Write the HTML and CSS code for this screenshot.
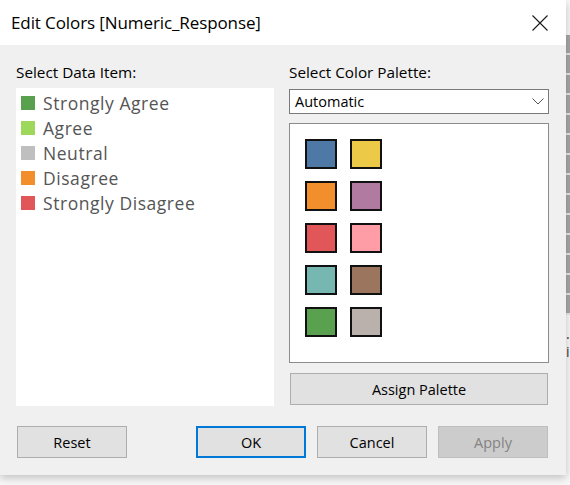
FILE: index.html
```html
<!DOCTYPE html>
<html>
<head>
<meta charset="utf-8">
<link rel="stylesheet" href="styles.css">
</head>
<body>
<div class="screen">
  <div class="dialog">
    <div class="titlebar">
      <span class="title">Edit Colors [Numeric_Response]</span>
      <svg class="close" width="16" height="16" viewBox="0 0 16 16"><path d="M0.5 0.5 L15.5 15.5 M15.5 0.5 L0.5 15.5" stroke="#1a1a1a" stroke-width="1.1" fill="none"/></svg>
    </div>
    <div class="content">
      <div class="columns">
        <div class="col-left">
          <div class="label">Select Data Item:</div>
          <div class="listbox">
            <div class="item"><span class="chip" style="background:#59a14f"></span>Strongly Agree</div>
            <div class="item"><span class="chip" style="background:#9dd85a"></span>Agree</div>
            <div class="item"><span class="chip" style="background:#bfbfbf"></span>Neutral</div>
            <div class="item"><span class="chip" style="background:#f28e2b"></span>Disagree</div>
            <div class="item"><span class="chip" style="background:#e15759"></span>Strongly Disagree</div>
          </div>
        </div>
        <div class="col-right">
          <div class="label">Select Color Palette:</div>
          <div class="select">
            <span>Automatic</span>
            <svg class="chev" width="12" height="7" viewBox="0 0 12 7"><path d="M0.5 0.5 L6 6 L11.5 0.5" stroke="#555" stroke-width="1" fill="none"/></svg>
          </div>
          <div class="palette">
            <div class="swatches">
              <span class="sw" style="background:#4e79a7"></span>
              <span class="sw" style="background:#edc948"></span>
              <span class="sw" style="background:#f28e2b"></span>
              <span class="sw" style="background:#b07aa1"></span>
              <span class="sw" style="background:#e15759"></span>
              <span class="sw" style="background:#ff9da7"></span>
              <span class="sw" style="background:#76b7b2"></span>
              <span class="sw" style="background:#9c755f"></span>
              <span class="sw" style="background:#59a14f"></span>
              <span class="sw" style="background:#bab0ac"></span>
            </div>
          </div>
          <button class="btn assign">Assign Palette</button>
        </div>
      </div>
      <div class="buttons">
        <button class="btn">Reset</button>
        <div class="spacer"></div>
        <button class="btn ok">OK</button>
        <button class="btn">Cancel</button>
        <button class="btn disabled">Apply</button>
      </div>
    </div>
  </div>
  <div class="backdrop">
    <div class="dashes"></div>
    <div class="bits"><span class="dot">.</span><span class="ibit">i</span></div>
  </div>
</div>
</body>
</html>
```
FILE: styles.css
```css
html, body {
  margin: 0;
  padding: 0;
}
body {
  width: 570px;
  height: 485px;
  overflow: hidden;
  background: #f7f7f7;
  font-family: "Open Sans", "Noto Sans", "Liberation Sans", sans-serif;
}
.screen {
  display: flex;
  width: 570px;
  height: 485px;
}
.dialog {
  width: 566px;
  height: 475px;
  flex: none;
  background: #f0f0f0;
  box-shadow: 0 3px 8px rgba(0,0,0,0.22);
  display: flex;
  flex-direction: column;
  position: relative;
  z-index: 1;
}
.titlebar {
  height: 45px;
  background: #fff;
  display: flex;
  align-items: center;
  justify-content: space-between;
  padding: 0 18px 0 11px;
  box-sizing: border-box;
  flex: none;
}
.title {
  font-size: 17px;
  color: #000;
  letter-spacing: -0.1px;
}
.close {
  display: block;
}
.content {
  padding: 17px 0 0 16px;
  display: flex;
  flex-direction: column;
}
.columns {
  display: flex;
  gap: 15px;
}
.col-left {
  width: 258px;
  display: flex;
  flex-direction: column;
}
.col-right {
  width: 260px;
  display: flex;
  flex-direction: column;
}
.label {
  font-size: 15.3px;
  line-height: 20px;
  height: 20px;
  color: #000;
}
.col-left .label {
  margin-bottom: 6px;
}
.col-right .label {
  margin-bottom: 7px;
}
.listbox {
  height: 318px;
  background: #fff;
  padding: 2px 0 0 5px;
  box-sizing: border-box;
}
.item {
  height: 25px;
  display: flex;
  align-items: center;
  gap: 8px;
  font-family: "Open Sans", "Noto Sans", sans-serif;
  font-size: 17.5px;
  letter-spacing: 0.55px;
  color: #555;
}
.chip {
  width: 14px;
  height: 14px;
  flex: none;
}
.select {
  height: 25px;
  box-sizing: border-box;
  border: 1px solid #7a7a7a;
  background: #fff;
  display: flex;
  align-items: center;
  justify-content: space-between;
  padding: 0 4px 0 5px;
  font-size: 14.5px;
  color: #000;
}
.chev {
  display: block;
}
.palette {
  margin-top: 9px;
  height: 240px;
  box-sizing: border-box;
  border: 1px solid #8c8c8c;
  background: #fff;
  padding: 15px 0 0 15px;
}
.swatches {
  display: grid;
  grid-template-columns: 32px 32px;
  grid-auto-rows: 30px;
  column-gap: 13px;
  row-gap: 12px;
}
.sw {
  display: block;
  box-sizing: border-box;
  border: 2px solid #111;
}
.btn {
  font-family: "Open Sans", "Noto Sans", "Liberation Sans", sans-serif;
  font-size: 14.5px;
  color: #000;
  background: #e1e1e1;
  border: 1px solid #adadad;
  height: 32px;
  width: 110px;
  padding: 0;
  box-sizing: border-box;
}
.assign {
  margin-top: 10px;
  width: 258px;
  margin-left: 1px;
}
.buttons {
  display: flex;
  margin-top: 20px;
  gap: 11px;
  padding-left: 1px;
}
.spacer {
  width: 47px;
}
.ok {
  border: 2px solid #0078d7;
}
.disabled {
  background: #cccccc;
  border-color: #bfbfbf;
  color: #838383;
}
.backdrop {
  flex: 1;
  position: relative;
}
.dashes {
  position: absolute;
  left: 0;
  top: 35px;
  width: 4px;
  height: 280px;
  background: repeating-linear-gradient(to bottom, #a6a6a6 0 18px, #e6e6e6 18px 20px);
}
.bits {
  position: absolute;
  left: 0;
  top: 325px;
  font-size: 14px;
  line-height: 18px;
  display: flex;
  flex-direction: column;
  color: #333;
}
```
